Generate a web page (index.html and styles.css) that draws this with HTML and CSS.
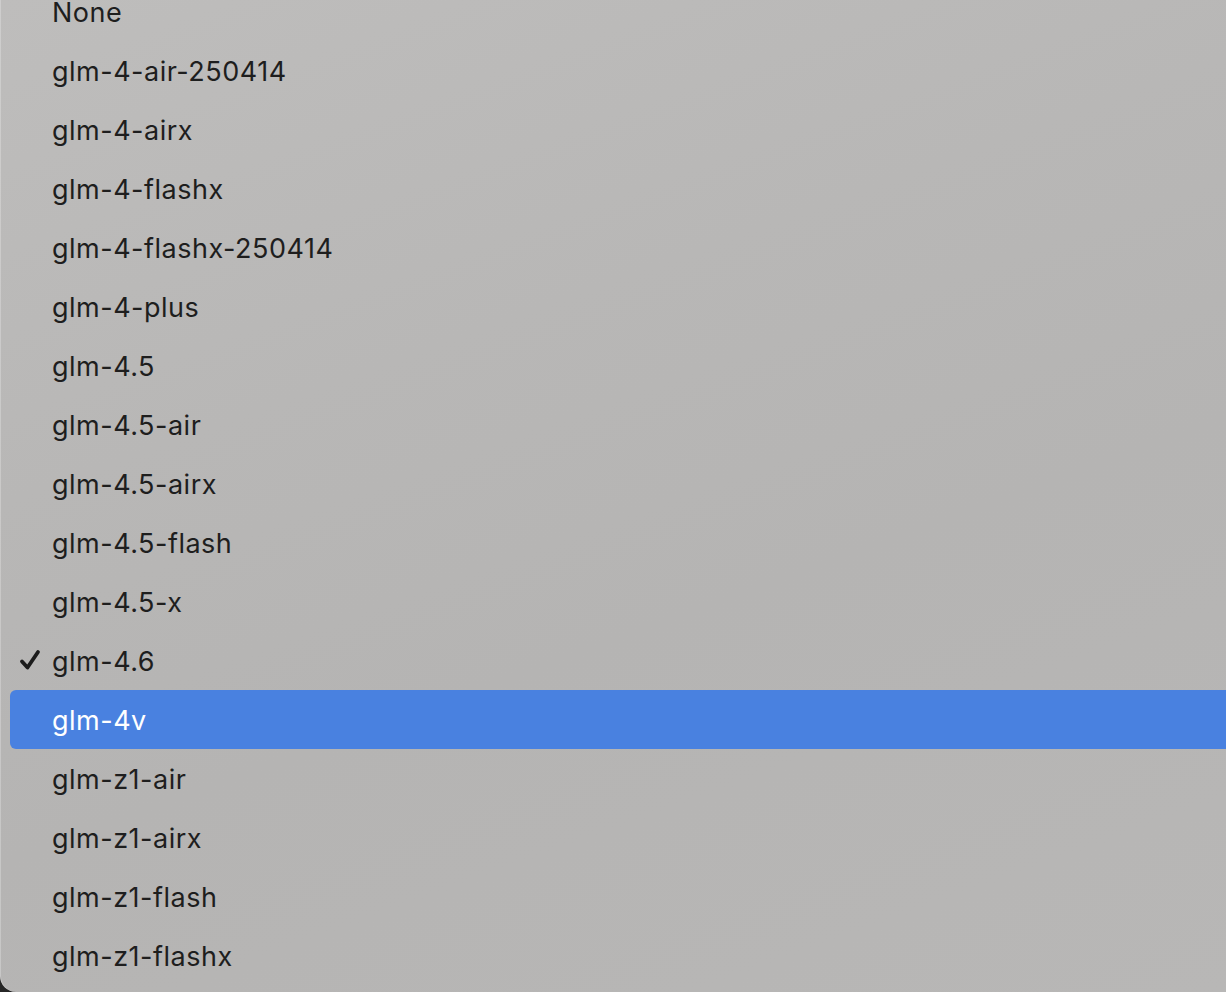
FILE: index.html
```html
<!DOCTYPE html>
<html lang="en">
<head>
    <meta charset="UTF-8">
    <title>Model menu</title>
    <link rel="stylesheet" href="styles.css">
</head>
<body>
    <div class="menu">
        <ul class="menu-list">
            <li class="menu-item">None</li>
            <li class="menu-item">glm-4-air-250414</li>
            <li class="menu-item">glm-4-airx</li>
            <li class="menu-item">glm-4-flashx</li>
            <li class="menu-item">glm-4-flashx-250414</li>
            <li class="menu-item">glm-4-plus</li>
            <li class="menu-item">glm-4.5</li>
            <li class="menu-item">glm-4.5-air</li>
            <li class="menu-item">glm-4.5-airx</li>
            <li class="menu-item">glm-4.5-flash</li>
            <li class="menu-item">glm-4.5-x</li>
            <li class="menu-item checked">
                <svg class="check" width="24" height="24" viewBox="0 0 24 24">
                    <path d="M3 12.5 L8.5 18.5 L19 3" fill="none" stroke="#1c1c1c" stroke-width="3.8" stroke-linecap="round" stroke-linejoin="round"/>
                </svg>
                glm-4.6
            </li>
            <li class="menu-item selected">glm-4v</li>
            <li class="menu-item">glm-z1-air</li>
            <li class="menu-item">glm-z1-airx</li>
            <li class="menu-item">glm-z1-flash</li>
            <li class="menu-item">glm-z1-flashx</li>
        </ul>
    </div>
</body>
</html>
```

FILE: styles.css
```css
html, body {
    margin: 0;
    padding: 0;
    height: 100%;
    overflow: hidden;
    background-color: #262626;
}
.menu {
    height: 992px;
    background: linear-gradient(160deg, #bebdbc 0%, #b8b7b6 35%, #b5b4b3 60%, #b8b7b6 100%);
    border-bottom-left-radius: 16px;
    box-shadow: inset 1px 0 0 rgba(255, 255, 255, 0.25);
    overflow: hidden;
}
.menu-list {
    list-style: none;
    margin: -18px 0 0 0;
    padding: 0;
}
.menu-item {
    position: relative;
    height: 59px;
    line-height: 61px;
    margin-left: 10px;
    padding-left: 42px;
    font-family: Inter, "Noto Sans", sans-serif;
    font-size: 27px;
    color: #1e1e1e;
    letter-spacing: 0.5px;
}
.menu-item.selected {
    background-color: #4981e0;
    color: #fff;
    border-radius: 6px 0 0 6px;
}
.check {
    position: absolute;
    left: 9px;
    top: 18px;
}
```
